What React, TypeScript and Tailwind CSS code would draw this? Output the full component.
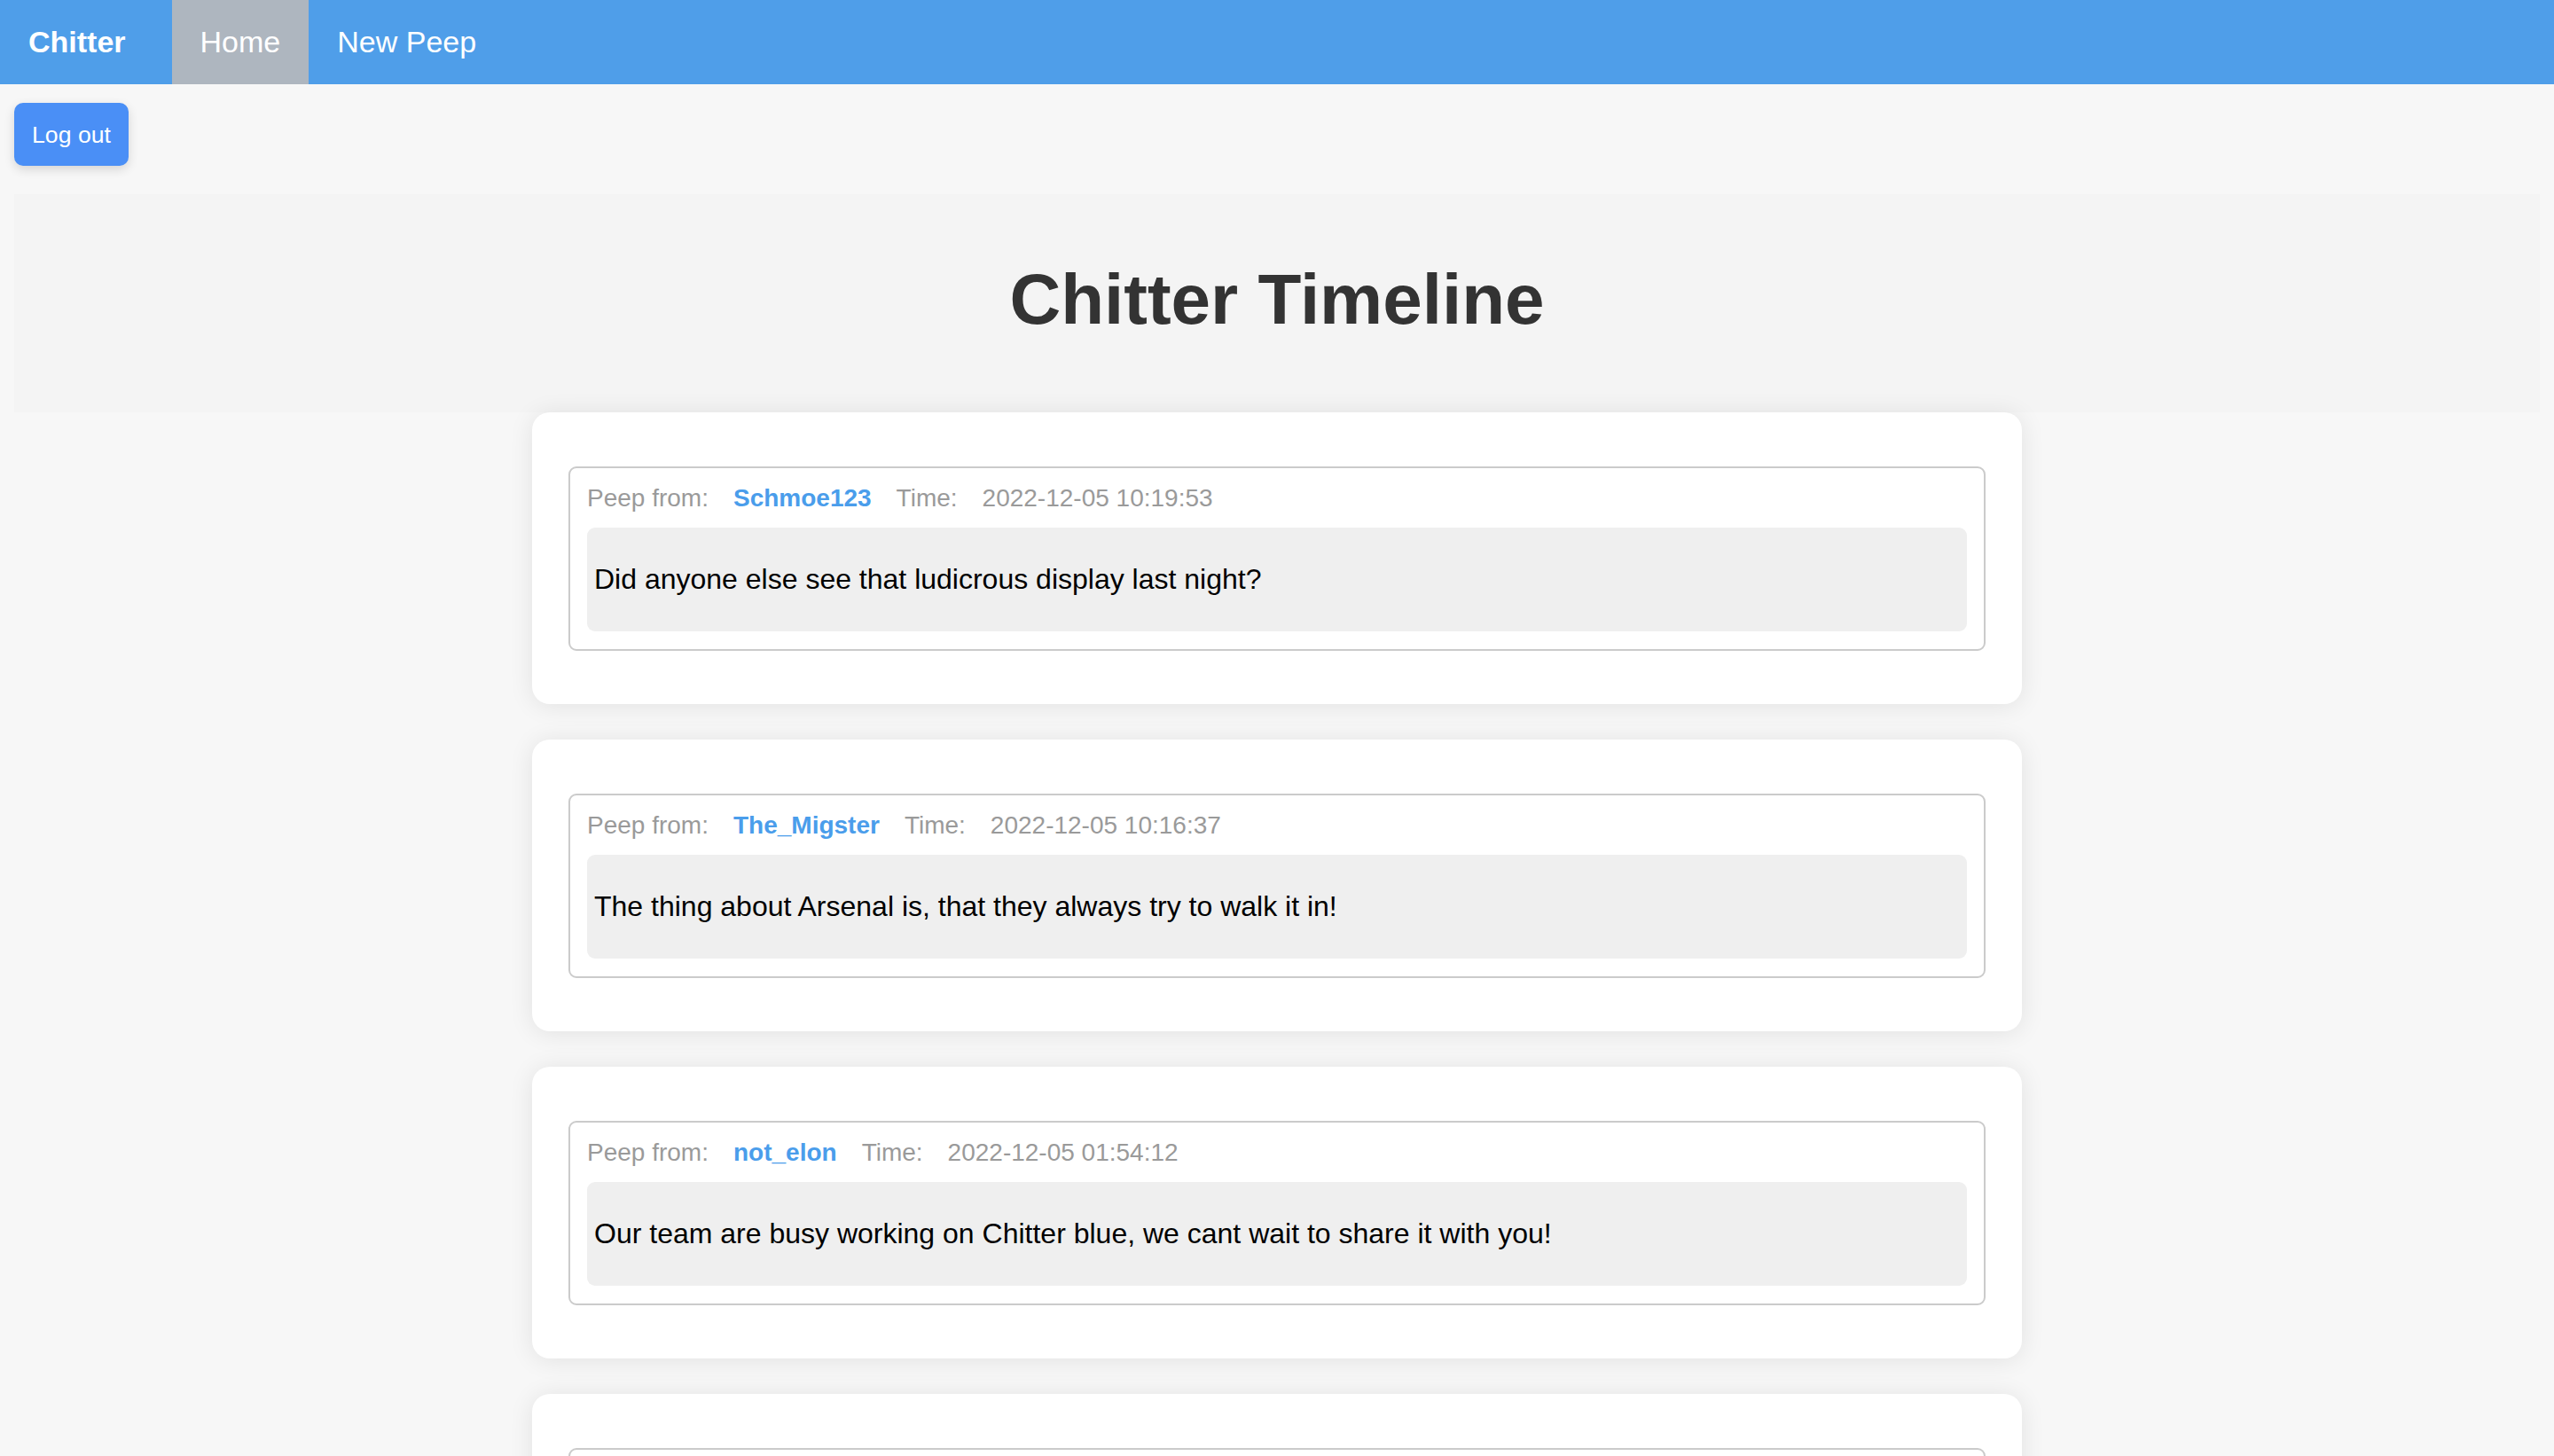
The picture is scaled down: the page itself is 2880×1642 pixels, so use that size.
import React from 'react';

type Peep = {
  id: number;
  username: string;
  time: string;
  body: string;
};

const peeps: Peep[] = [
  { id: 1, username: 'Schmoe123', time: '2022-12-05 10:19:53', body: 'Did anyone else see that ludicrous display last night?' },
  { id: 2, username: 'The_Migster', time: '2022-12-05 10:16:37', body: 'The thing about Arsenal is, that they always try to walk it in!' },
  { id: 3, username: 'not_elon', time: '2022-12-05 01:54:12', body: 'Our team are busy working on Chitter blue, we cant wait to share it with you!' },
  { id: 4, username: 'Schmoe123', time: '2022-12-04 22:41:08', body: 'First peep! Hello Chitter.' },
];

function PeepCard({ peep }: { peep: Peep }) {
  return (
    <div className="w-[1680px] bg-white rounded-[20px] shadow-[0_2px_28px_rgba(0,0,0,0.09)] pt-[61px] pb-[60px] px-[41px]">
      <div className="border-2 border-[#cbcbcb] rounded-[9px] pt-[18px] pb-[20px] px-[19px]">
        {/* Meta line */}
        <div className="flex gap-[28px] text-[28px] leading-[32px] text-[#9a9a9a]">
          <span>Peep from:</span>
          <span className="font-bold text-[#4a9deb]">{peep.username}</span>
          <span>Time:</span>
          <span>{peep.time}</span>
        </div>
        <div className="mt-[17px] bg-[#efefef] rounded-[9px] px-[8px] py-[40px]">
          <p className="text-[32px] leading-[37px] text-black">{peep.body}</p>
        </div>
      </div>
    </div>
  );
}

export default function App() {
  return (
    <div className="min-h-screen bg-[#f7f7f7] font-['Liberation_Sans',Arial,sans-serif] pb-[60px]">
      {/* Nav */}
      <nav className="h-[95px] bg-[#4f9ee9] flex items-stretch text-[34px] text-white">
        <a className="flex items-center pl-[32px] pr-[52px] font-bold">Chitter</a>
        <a className="flex items-center px-[32px] bg-[#aeb6bf]">Home</a>
        <a className="flex items-center px-[32px]">New Peep</a>
      </nav>

      <div className="px-[16px]">
        <div className="pt-[21px]">
          <button className="h-[71px] px-[20px] bg-[#4a8ff6] text-white text-[26.67px] rounded-[10px] shadow-[0_4px_12px_rgba(0,0,0,0.14)]">
            Log out
          </button>
        </div>
        <div className="mt-[32px] bg-[#f4f4f4] pt-[73px] pb-[81px]">
          <h1 className="text-center text-[80px] leading-[92px] font-bold text-[#333333]">Chitter Timeline</h1>
        </div>
      </div>

      {/* Timeline */}
      <div className="flex flex-col items-center gap-[40px]">
        {peeps.map((peep) => (
          <PeepCard key={peep.id} peep={peep} />
        ))}
      </div>
    </div>
  );
}
